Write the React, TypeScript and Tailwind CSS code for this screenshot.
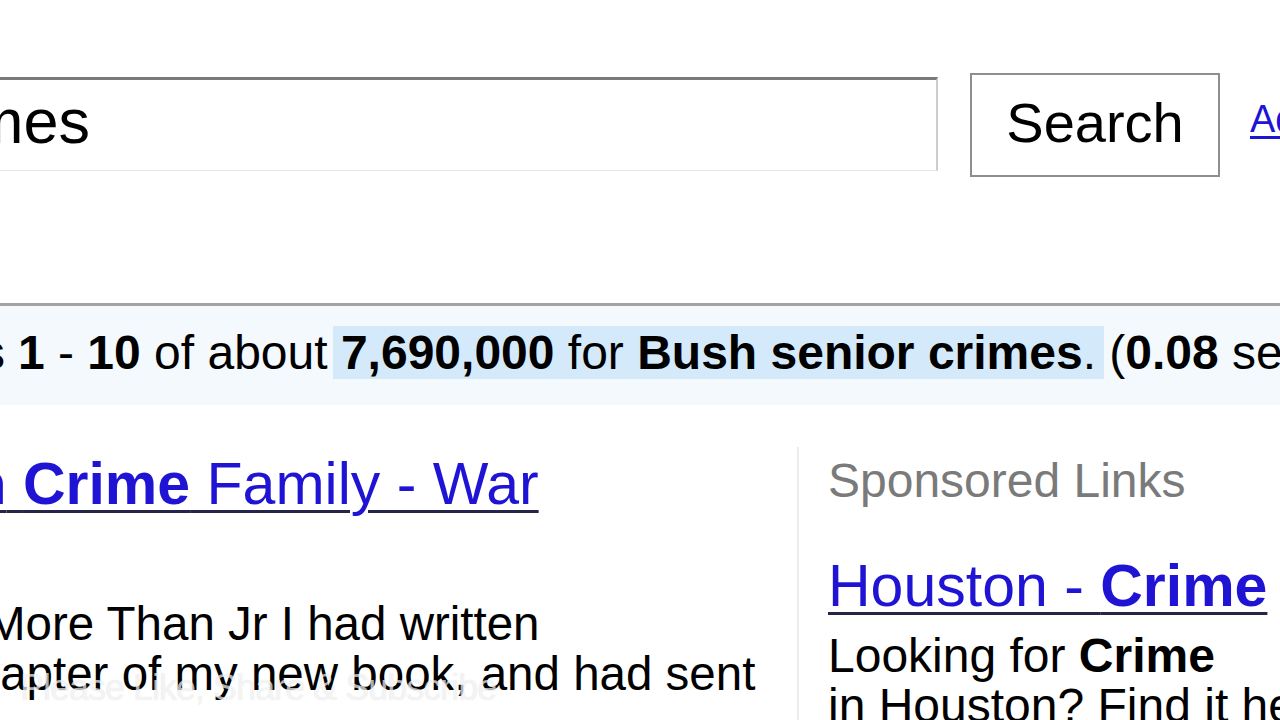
import React from "react";

export default function App() {
  return (
    <div className="relative w-[1280px] h-[720px] overflow-hidden bg-white text-black font-['Liberation_Sans',Arial,Helvetica,sans-serif]">
      {/* search row */}
      <div className="flex items-start pt-[73px]">
        <div className="mt-[4px] w-[938px] h-[94px] shrink-0 bg-white border-t-[3px] border-t-[#7a7a7a] border-r-2 border-r-[#cdcdcd] border-b border-b-[#e6e6e6] flex items-start pt-[10px]">
          <div className="w-[90px] shrink-0 flex justify-end whitespace-nowrap text-[63px] leading-none">
            Bush senior crimes
          </div>
        </div>
        <button className="ml-[32px] w-[250px] h-[104px] shrink-0 border-2 border-[#8e8e8e] bg-white flex items-center justify-center pb-[4px] text-[56px] leading-none text-black">
          Search
        </button>
        <a className="ml-[30px] mt-[27px] whitespace-nowrap text-[38px] leading-none text-[#2014d4] underline decoration-[3px] underline-offset-[4px]">
          Advanced Search
        </a>
      </div>

      {/* results bar */}
      <div className="mt-[126px] h-[102px] border-t-[3px] border-t-[#a3a3a3] bg-[#f3f9fd] pt-[23px]">
        <div className="flex whitespace-nowrap text-[48px] leading-none">
          <div className="w-[5px] shrink-0 flex justify-end">Results</div>
          <div className="pl-[13px]">
            <b>1</b> - <b>10</b> of about{" "}
            <span className="bg-[#d4eafa] -mx-[8px] px-[8px]">
              <b>7,690,000</b> for <b>Bush senior crimes</b>.
            </span>{" "}
            (<b>0.08</b> seconds)
          </div>
        </div>
      </div>

      {/* main area */}
      <div className="flex items-start">
        {/* organic results */}
        <div className="w-[797px] shrink-0 pt-[50px]">
          <div className="-ml-[141px] whitespace-nowrap text-[59px] leading-none">
            <a className="text-[#2014d4] underline decoration-[3px] decoration-[#25254a] underline-offset-[6px]">
              <b>Bush</b> <b>Crime</b> Family - War
            </a>
          </div>
          <div className="-ml-[50px] mt-[85px] whitespace-nowrap text-[47.5px] leading-[50px]">
            <div className="pl-[36px]">More Than Jr I had written</div>
            <div>chapter of my new book, and had sent</div>
          </div>
        </div>

        {/* sponsored links */}
        <div className="mt-[42px] h-[300px] flex-1 border-l-2 border-l-[#ececec] pl-[29px] pt-[10px] whitespace-nowrap">
          <div className="text-[48px] leading-none text-[#7a7a7a]">Sponsored Links</div>
          <div className="mt-[52px] text-[59px] leading-none">
            <a className="text-[#2014d4] underline decoration-[3px] decoration-[#25254a] underline-offset-[6px]">
              Houston - <b>Crime</b>
            </a>
          </div>
          <div className="mt-[15px] text-[48px] leading-[50px]">
            <div>
              Looking for <b>Crime</b>
            </div>
            <div>in Houston? Find it here</div>
          </div>
        </div>
      </div>

      {/* watermark overlay */}
      <div className="absolute left-[20px] top-[670px] whitespace-nowrap text-[36px] leading-none tracking-[-1px] text-white/70 [text-shadow:0_0_1px_rgba(0,0,0,0.15)]">
        Please Like, Share &amp; Subscribe
      </div>
    </div>
  );
}
